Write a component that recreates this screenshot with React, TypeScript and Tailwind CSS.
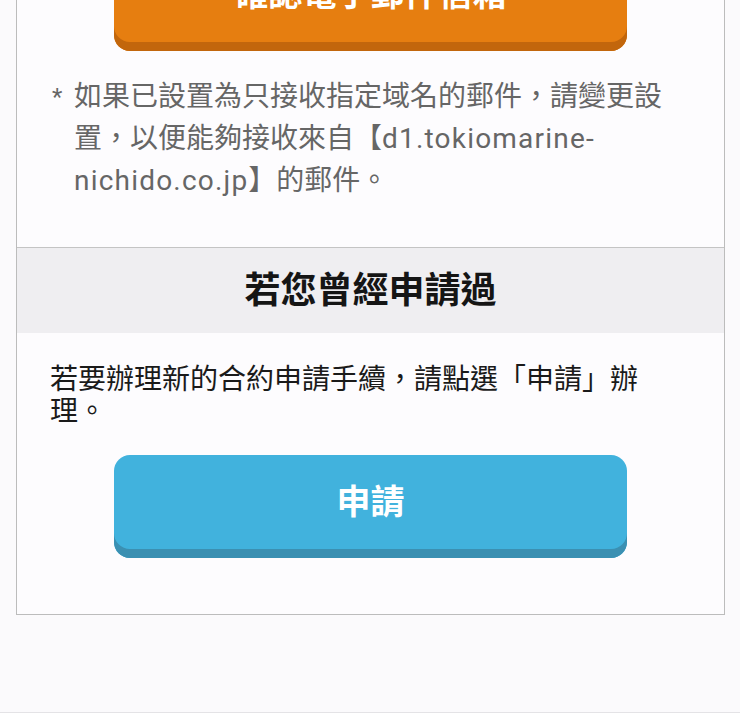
import React from 'react'

const FONT = 'font-["Roboto","Noto_Sans_CJK_TC",sans-serif]'

export default function App() {
  return (
    <div className={`min-h-[716px] bg-[#fbfafc] ${FONT}`}>
      <div className="-mt-[53px] ml-[16px] w-[709px] border-x border-b border-[#bcbcbc] bg-[#fdfcfe]">
        {/* e-mail check section */}
        <div className="pb-[45px]">
          <button className="mx-auto flex h-[104px] w-[513px] items-center justify-center rounded-[16px] bg-[#e67e10] pb-[9px] text-[34px] font-bold text-white shadow-[inset_0_-9px_0_#c2660c]">
            確認電子郵件信箱
          </button>
          <div className="mt-[25px] flex pl-[35px] pr-[40px] text-[28px] leading-[42px] text-[#666666]">
            <span className="w-[22px] shrink-0 text-[24px]">*</span>
            <p>
              如果已設置為只接收指定域名的郵件，請變更設置，以便能夠接收來自【
              <span className="tracking-[1.2px]">d1.tokiomarine-nichido.co.jp</span>】的郵件。
            </p>
          </div>
        </div>

        {/* already applied */}
        <div className="border-t border-[#c4c4c4]">
          <h2 className="flex h-[85px] items-center justify-center bg-[#efeef1] text-[36px] font-bold text-[#151515]">
            若您曾經申請過
          </h2>
          <div className="pb-[56px] pt-[31px]">
            <p className="pl-[33px] pr-[44px] text-[28px] leading-[32px] text-[#1a1a1a]">
              若要辦理新的合約申請手續，請點選「申請」辦理。
            </p>
            <button className="mx-auto mt-[27px] flex h-[103px] w-[513px] items-center justify-center rounded-[16px] bg-[#41b2dd] pb-[9px] text-[34px] font-bold text-white shadow-[inset_0_-9px_0_#3b90b2]">
              申請
            </button>
          </div>
        </div>
      </div>
      <div className="mt-[97px] border-b border-[#e4e3e6]" />
    </div>
  )
}
